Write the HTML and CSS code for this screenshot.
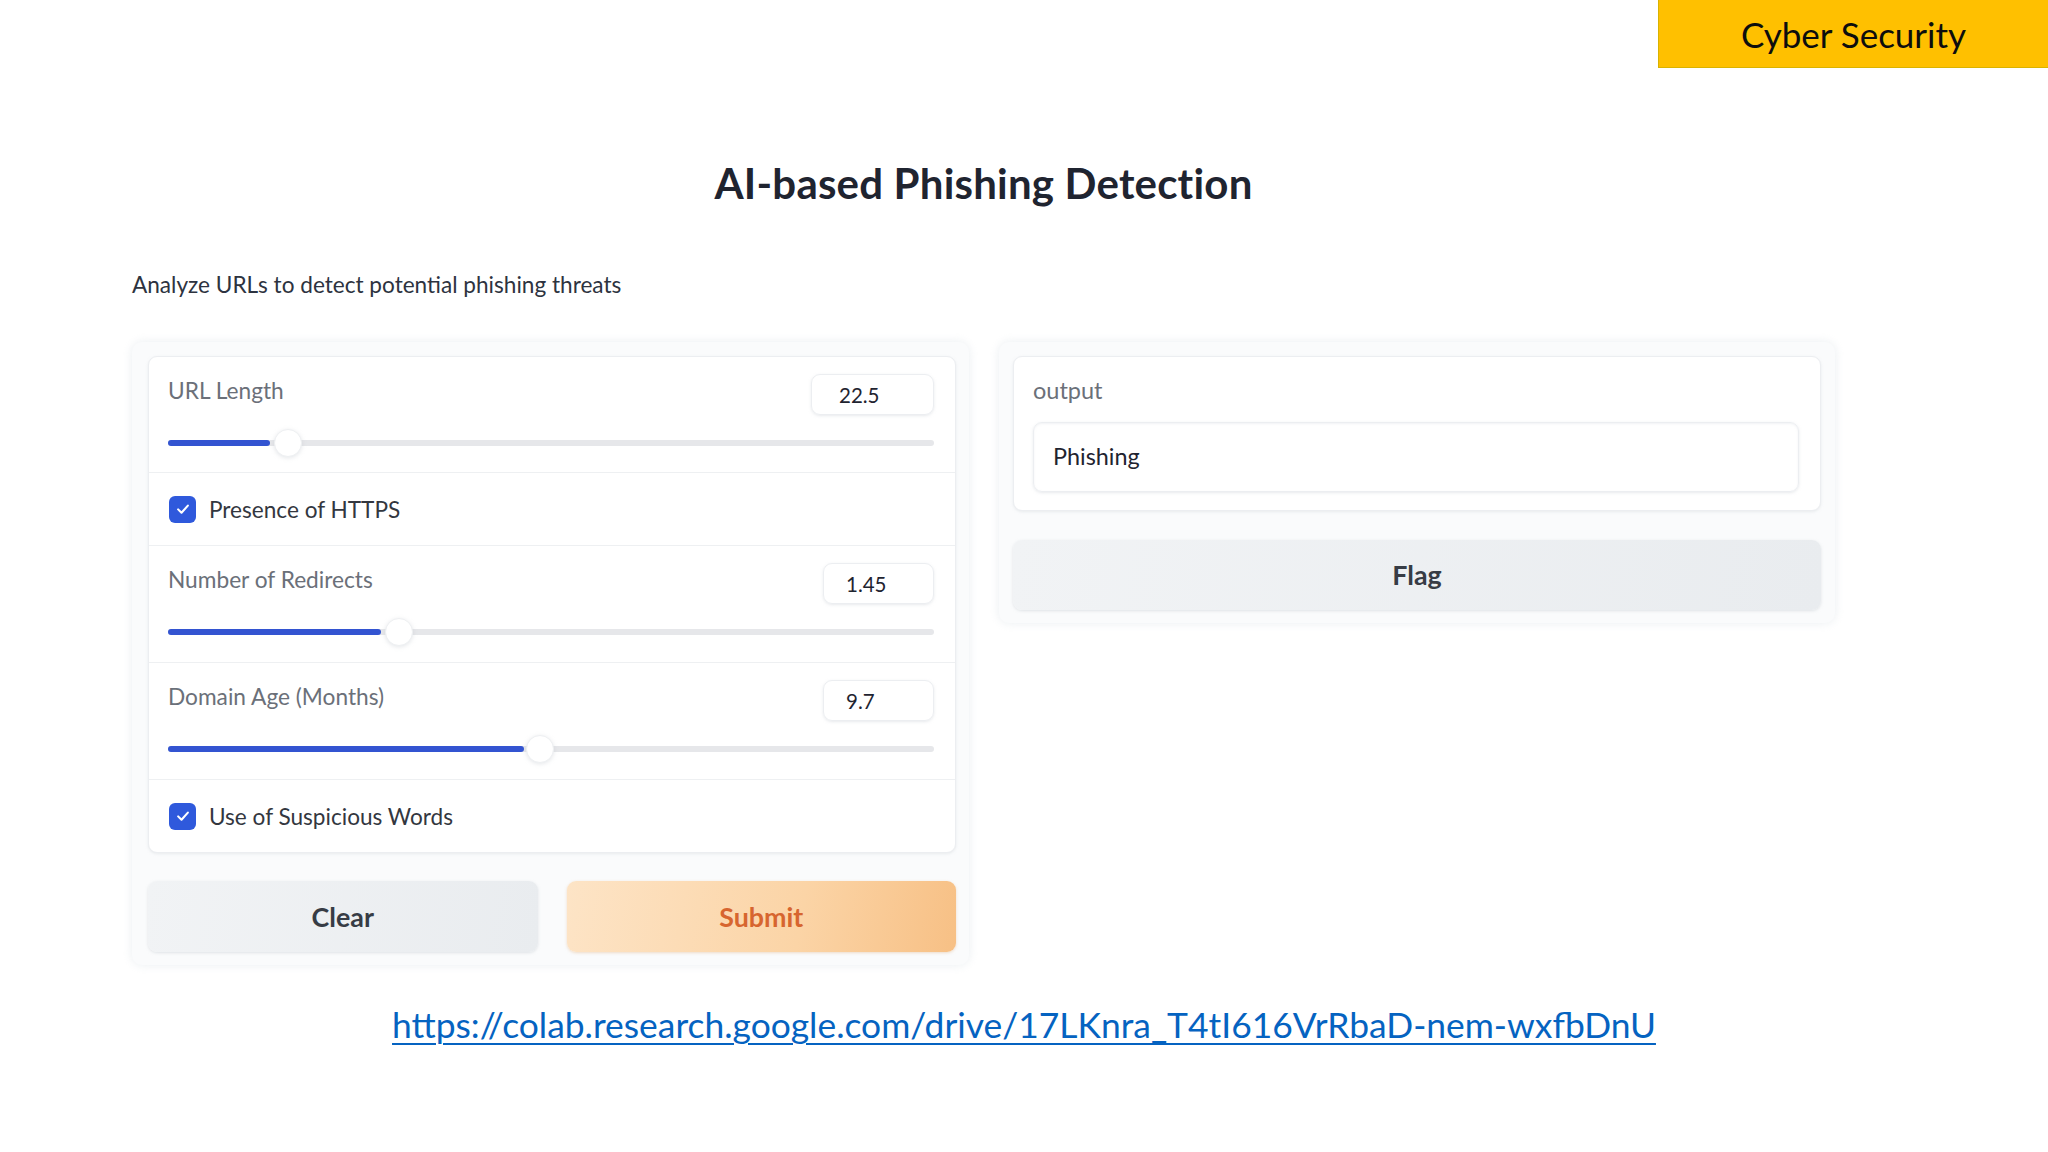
FILE: index.html
```html
<!DOCTYPE html>
<html lang="en">
<head>
<meta charset="utf-8">
<title>AI-based Phishing Detection</title>
<link rel="stylesheet" href="styles.css">
</head>
<body>
<div class="topbar"><div class="badge">Cyber Security</div></div>

<div class="app">
  <h1 class="title">AI-based Phishing Detection</h1>
  <p class="desc">Analyze URLs to detect potential phishing threats</p>

  <div class="columns">
    <div class="panel panel-left">
      <div class="card">
        <div class="row slider-row">
          <div class="row-head">
            <span class="label">URL Length</span>
            <span class="num num-wide">22.5</span>
          </div>
          <div class="slider">
            <div class="track"></div>
            <div class="fill" style="width:102px"></div>
            <div class="thumb" style="left:106px"></div>
          </div>
        </div>
        <div class="row check-row">
          <span class="checkbox"><svg viewBox="0 0 24 24" width="18" height="18"><polyline points="5.5,12.5 10,17 18.5,7.5" fill="none" stroke="#fff" stroke-width="2.8" stroke-linecap="round" stroke-linejoin="round"/></svg></span>
          <span class="check-label">Presence of HTTPS</span>
        </div>
        <div class="row slider-row">
          <div class="row-head">
            <span class="label">Number of Redirects</span>
            <span class="num">1.45</span>
          </div>
          <div class="slider">
            <div class="track"></div>
            <div class="fill" style="width:213px"></div>
            <div class="thumb" style="left:217px"></div>
          </div>
        </div>
        <div class="row slider-row">
          <div class="row-head">
            <span class="label">Domain Age (Months)</span>
            <span class="num">9.7</span>
          </div>
          <div class="slider">
            <div class="track"></div>
            <div class="fill" style="width:356px"></div>
            <div class="thumb" style="left:358px"></div>
          </div>
        </div>
        <div class="row check-row last">
          <span class="checkbox"><svg viewBox="0 0 24 24" width="18" height="18"><polyline points="5.5,12.5 10,17 18.5,7.5" fill="none" stroke="#fff" stroke-width="2.8" stroke-linecap="round" stroke-linejoin="round"/></svg></span>
          <span class="check-label">Use of Suspicious Words</span>
        </div>
      </div>
      <div class="buttons">
        <button class="btn btn-secondary">Clear</button>
        <button class="btn btn-primary">Submit</button>
      </div>
    </div>

    <div class="panel panel-right">
      <div class="card out-card">
        <span class="label">output</span>
        <div class="textbox">Phishing</div>
      </div>
      <button class="btn btn-secondary btn-flag">Flag</button>
    </div>
  </div>
</div>

<div class="linkline"><a href="#" class="link">https://colab.research.google.com/drive/17LKnra_T4tI616VrRbaD-nem-wxfbDnU</a></div>
</body>
</html>
```
FILE: styles.css
```css
* { box-sizing: border-box; }
html, body { margin: 0; padding: 0; background: #ffffff; }
body { font-family: Lato, "Noto Sans", sans-serif; width: 2048px; height: 1152px; overflow: hidden; }

.topbar { display: flex; justify-content: flex-end; }
.badge {
  width: 390px; height: 68px; background: #ffc000;
  border: 1px solid #d9b300; border-right: none; border-top: none;
  display: flex; align-items: center; justify-content: center;
  font-family: Lato, "Noto Sans", sans-serif; font-size: 35px; color: #0d0d0d;
  padding-top: 1px;
}

.app { margin-left: 132px; width: 1703px; }
.title {
  margin: 91px 0 0; text-align: center; font-size: 42px; line-height: 48px;
  font-weight: 700; color: #1f2430; letter-spacing: 0.2px;
}
.desc {
  margin: 64px 0 0; font-size: 22.6px; line-height: 28px; color: #2d3340;
}

.columns { display: flex; gap: 30px; align-items: flex-start; margin-top: 43px; }

.panel {
  background: #fafbfc; border-radius: 10px;
  box-shadow: 0 0 10px rgba(220, 226, 232, 0.6);
}
.panel-left { width: 837px; padding: 14px 13px 13px 16px; }
.panel-right { width: 836px; padding: 14px 14px 13px 14px; }

.card {
  background: #ffffff; border: 1px solid #eceef1; border-radius: 9px;
  box-shadow: 0 1px 3px rgba(200, 205, 212, 0.35);
  overflow: hidden;
}

.row { border-bottom: 1px solid #eef0f2; }
.row.last { border-bottom: none; }
.slider-row { padding: 17px 21px 0 19px; height: 117px; }
.row:first-child.slider-row { height: 116px; }
.row-head { display: flex; justify-content: space-between; align-items: flex-start; }
.label { font-size: 22.7px; line-height: 28px; color: #6b7079; margin-top: 3px; }
.num {
  width: 111px; height: 41px; border: 1px solid #eceef1; border-radius: 9px;
  box-shadow: 0 1px 3px rgba(210, 214, 220, 0.5);
  font-size: 20.5px; line-height: 40px; color: #1f2430; padding-left: 22px;
}
.num-wide { width: 123px; padding-left: 27px; }

.slider { position: relative; height: 26px; margin-top: 15px; }
.track {
  position: absolute; left: 0; right: 0; top: 10px; height: 6px;
  background: #e6e7ea; border-radius: 3px;
}
.fill {
  position: absolute; left: 0; top: 10px; height: 6px;
  background: #3354d1; border-radius: 3px;
}
.thumb {
  position: absolute; top: -1px; width: 28px; height: 28px; border-radius: 50%;
  background: #ffffff; border: 1px solid #eef0f2;
  box-shadow: 0 1px 4px rgba(180, 186, 196, 0.35);
}

.check-row { height: 73px; padding: 0 20px; display: flex; align-items: center; gap: 13px; }
.row.last.check-row { height: 72px; }
.checkbox {
  width: 27px; height: 27px; border-radius: 6px; background: #2f59dc;
  display: flex; align-items: center; justify-content: center;
}
.check-label { font-size: 22.6px; color: #33373f; }

.buttons { display: flex; gap: 29px; margin-top: 28px; }
.btn {
  font-family: Lato, "Noto Sans", sans-serif; font-weight: 700; font-size: 26.8px;
  height: 71px; border: none; border-radius: 9px; cursor: pointer;
}
.buttons .btn { flex: 1; }
.btn-secondary {
  background: linear-gradient(100deg, #f1f3f5 0%, #e9ecef 100%);
  color: #373c45; box-shadow: 0 1px 3px rgba(200, 205, 212, 0.5);
}
.btn-primary {
  background: linear-gradient(100deg, #fde4c6 0%, #fbd4a6 60%, #f7c085 100%);
  color: #d7652f; box-shadow: 0 1px 3px rgba(230, 190, 150, 0.5);
}

.out-card { padding: 18px 21px 20px 19px; height: 155px; }
.out-card .label { display: block; margin-top: 0; line-height: 30px; font-size: 23.5px; }
.textbox {
  margin-top: 17px; height: 70px; border: 1px solid #eceef1; border-radius: 9px;
  box-shadow: 0 1px 3px rgba(210, 214, 220, 0.5), inset 0 1px 2px rgba(230, 232, 236, 0.5);
  font-size: 23.4px; line-height: 66px; color: #1f2430; padding-left: 19px;
}
.btn-flag { width: 100%; margin-top: 29px; height: 70px; }

.linkline { text-align: center; margin-top: 38px; }
.link {
  font-family: Lato, "Noto Sans", sans-serif; font-size: 35.4px; line-height: 44px;
  color: #0563c1; text-decoration: underline; text-underline-offset: 5px;
  text-decoration-thickness: 2px;
}
```
